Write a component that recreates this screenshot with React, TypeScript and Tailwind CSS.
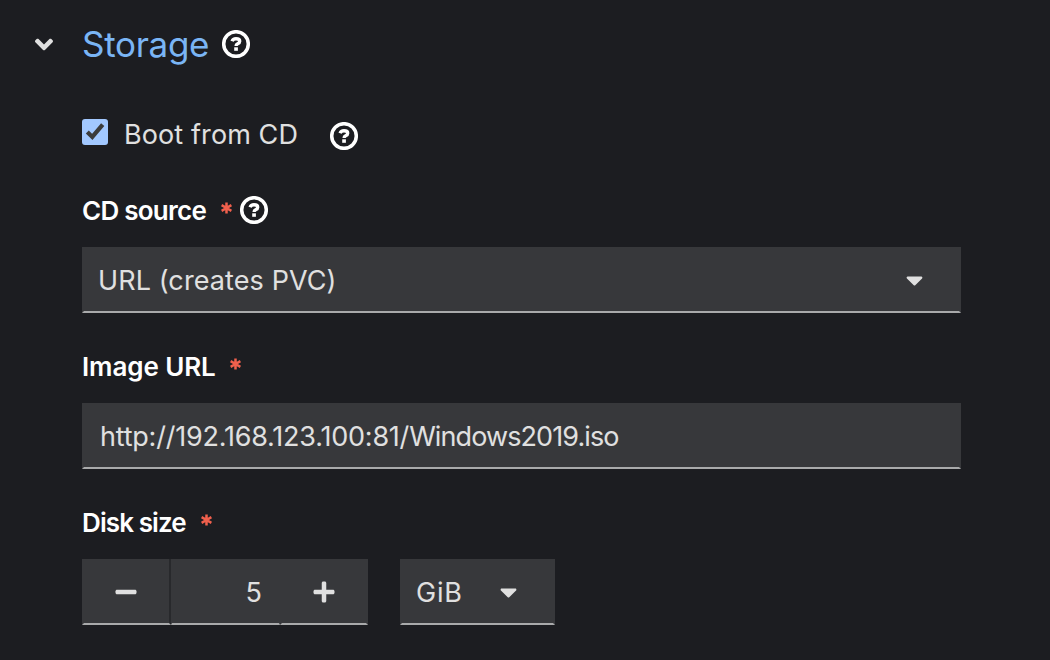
import type { ReactNode } from "react";
import { FaAngleDown, FaCaretDown, FaMinus, FaPlus } from "react-icons/fa";

function HelpIcon() {
  return (
    <svg className="size-7 shrink-0 text-white" viewBox="0 0 28 28" fill="none" stroke="currentColor">
      <circle cx="14" cy="14" r="12.3" strokeWidth="3.5" />
      <path d="M10.1 11.2C10.7 9.5 12.1 8.8 14 8.8c2.2 0 3.7.9 3.7 2.5 0 1.4-.9 2-2 2.5-1.1.6-1.6 1-1.6 2.2" strokeWidth="3.4" />
      <rect x="12.2" y="17.3" width="3.7" height="3.5" fill="currentColor" stroke="none" />
    </svg>
  );
}

function Asterisk() {
  return (
    <svg className="mb-[5px] h-[12px] w-[11px] shrink-0 text-[#f0604d]" viewBox="0 0 11 12" stroke="currentColor" strokeWidth="2.5">
      <path d="M5.5.5v11M.6 3.2l9.8 5.6M.6 8.8l9.8-5.6" />
    </svg>
  );
}

function Label({ children }: { children: ReactNode }) {
  return <div className="flex h-9 items-center whitespace-nowrap text-[26px] font-semibold text-white">{children}</div>;
}

export default function App() {
  return (
    <main
      className="h-[660px] w-[1050px] overflow-hidden bg-[#1c1d21] pl-[82px] pr-[89px] text-[27px] text-[#e0e0e0]"
      style={{ fontFamily: 'Inter, "Open Sans", sans-serif' }}
    >
      <header className="-ml-[48px] flex h-[88px] items-center">
        <FaAngleDown className="ml-px h-[29px] w-[18px]" />
        <h1 className="ml-[29px] w-[140px] whitespace-nowrap text-[35px] tracking-[-0.3px] text-[#7ab5f5]">Storage</h1>
        <HelpIcon />
      </header>
      <div className="mt-[29px] flex h-9 items-center">
        <span className="mb-[6px] flex size-[26px] items-center justify-center rounded-[3px] bg-[#a2c8ff]">
          <svg className="size-[26px]" viewBox="0 0 26 26" fill="none" stroke="#3b3b3b" strokeWidth="4.2">
            <path d="m5.3 13 5 4.9L20.7 5.6" />
          </svg>
        </span>
        <span className="ml-4 w-[206px] whitespace-nowrap tracking-[0.1px]">Boot from CD</span>
        <span className="mt-[2px]"><HelpIcon /></span>
      </div>
      <div className="mt-[39px]">
        <Label>
          <span className="w-[139px] tracking-[-0.75px]">CD source</span>
          <Asterisk />
          <span className="ml-2"><HelpIcon /></span>
        </Label>
      </div>
      <button className="mt-[19px] flex h-[66px] w-full items-center border-x-2 border-b-2 border-x-transparent border-b-[#a9aaab] bg-[#37383b] pl-[14px] pr-[36px]">
        <span className="grow whitespace-nowrap pt-[4px] text-left tracking-[0.1px]">URL (creates PVC)</span>
        <FaCaretDown className="mt-[2px] h-[28px] w-[17px]" />
      </button>
      <div className="mt-[35px]">
        <Label>
          <span className="w-[148px] tracking-[-0.1px]">Image URL</span>
          <Asterisk />
        </Label>
      </div>
      <div className="mt-[19px] flex h-[66px] items-center border-x-2 border-b-2 border-x-transparent border-b-[#a9aaab] bg-[#37383b] pl-4">
        <span className="whitespace-nowrap pt-[4px] tracking-[-0.22px]">
          http://192.168.123.100:81/<span className="tracking-[-0.9px]">Windows2019.iso</span>
        </span>
      </div>
      <div className="mt-[35px]">
        <Label>
          <span className="w-[119px] tracking-[-0.9px]">Disk size</span>
          <Asterisk />
        </Label>
      </div>
      <div className="mt-[19px] flex">
        <div className="flex h-[66px] w-[286px] bg-[#37383b]">
          <button className="flex w-[89px] items-center justify-center border-x-2 border-b-2 border-l-transparent border-r-[#28292c] border-b-[#a9aaab]">
            <FaMinus className="mr-px mt-[2px] size-[24px]" />
          </button>
          <span className="flex w-[109px] items-center justify-end border-x border-b-2 border-x-transparent border-b-[#a9aaab] pr-[17px] pt-[4px]">5</span>
          <button className="flex w-[88px] items-center justify-center border-x-2 border-b-2 border-x-transparent border-b-[#a9aaab]">
            <FaPlus className="mr-px mt-[2px] size-[24px]" />
          </button>
        </div>
        <button className="ml-8 flex h-[66px] w-[155px] items-center border-x-2 border-b-2 border-x-transparent border-b-[#a9aaab] bg-[#37383b] pl-[14px]">
          <span className="w-[84px] pt-[4px] text-left tracking-[0.8px]">GiB</span>
          <FaCaretDown className="mt-[2px] h-[28px] w-[17px]" />
        </button>
      </div>
    </main>
  );
}
